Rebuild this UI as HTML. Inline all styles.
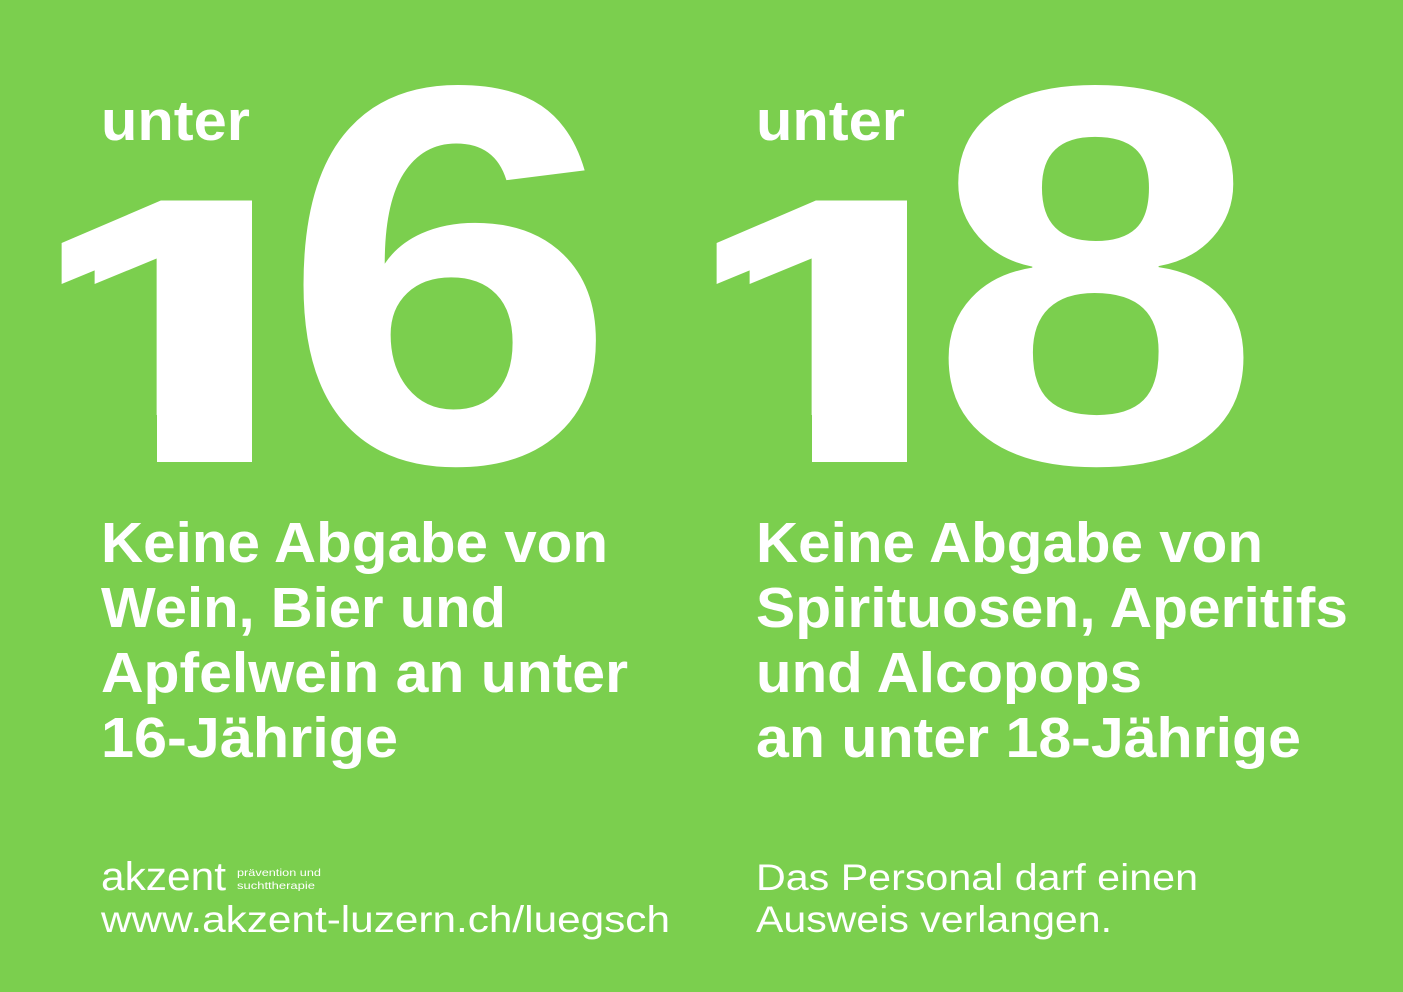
<!DOCTYPE html>
<html><head><meta charset="utf-8"><style>
html,body{margin:0;padding:0;background:#7bcf4e;}
svg{display:block}
text{font-family:"Liberation Sans",sans-serif;fill:#fff}
</style></head><body>
<svg width="1403" height="992" viewBox="0 0 1403 992" xmlns="http://www.w3.org/2000/svg">
<defs>
<clipPath id="c1"><rect x="157" y="180" width="95" height="290"/><rect x="40" y="180" width="212" height="235"/></clipPath>
<clipPath id="c2"><rect x="812" y="180" width="95" height="290"/><rect x="695" y="180" width="212" height="235"/></clipPath>
</defs>
<rect width="1403" height="992" fill="#7bcf4e"/>
<text x="101" y="140" font-size="57" font-weight="bold" textLength="149" lengthAdjust="spacingAndGlyphs">unter</text>
<text x="756" y="140" font-size="57" font-weight="bold" textLength="149" lengthAdjust="spacingAndGlyphs">unter</text>

<g clip-path="url(#c1)">
<g transform="translate(80,462) scale(1.56,1.03)"><text x="-37" y="0" font-size="369" font-weight="bold">1</text></g>
<g transform="translate(113,462) scale(1.56,1.03)"><text x="-37" y="0" font-size="369" font-weight="bold">1</text></g>
</g>
<g transform="translate(306,462) scale(1.12,1)"><text x="-22" y="0" font-size="540" font-weight="bold">6</text></g>
<g clip-path="url(#c2)">
<g transform="translate(735,462) scale(1.56,1.03)"><text x="-37" y="0" font-size="369" font-weight="bold">1</text></g>
<g transform="translate(768,462) scale(1.56,1.03)"><text x="-37" y="0" font-size="369" font-weight="bold">1</text></g>
</g>
<g transform="translate(954,462) scale(1.106,1)"><text x="-22" y="0" font-size="540" font-weight="bold">8</text></g>

<g font-size="57" font-weight="bold">
<text x="101" y="562" textLength="507" lengthAdjust="spacingAndGlyphs">Keine Abgabe von</text>
<text x="101" y="627" textLength="405" lengthAdjust="spacingAndGlyphs">Wein, Bier und</text>
<text x="101" y="692" textLength="527" lengthAdjust="spacingAndGlyphs">Apfelwein an unter</text>
<text x="101" y="757" textLength="297" lengthAdjust="spacingAndGlyphs">16-Jährige</text>
<text x="756" y="562" textLength="507" lengthAdjust="spacingAndGlyphs">Keine Abgabe von</text>
<text x="756" y="627" textLength="592" lengthAdjust="spacingAndGlyphs">Spirituosen, Aperitifs</text>
<text x="756" y="692" textLength="386" lengthAdjust="spacingAndGlyphs">und Alcopops</text>
<text x="756" y="757" textLength="545" lengthAdjust="spacingAndGlyphs">an unter 18-Jährige</text>
</g>

<text x="101" y="890" font-size="40" textLength="125" lengthAdjust="spacingAndGlyphs">akzent</text>
<text x="237" y="876" font-size="10.5" textLength="84" lengthAdjust="spacingAndGlyphs">prävention und</text>
<text x="237" y="889" font-size="10.5" textLength="78" lengthAdjust="spacingAndGlyphs">suchttherapie</text>
<text x="101" y="932" font-size="37" textLength="569" lengthAdjust="spacingAndGlyphs">www.akzent-luzern.ch/luegsch</text>
<text x="756" y="890" font-size="37" textLength="442" lengthAdjust="spacingAndGlyphs">Das Personal darf einen</text>
<text x="756" y="932" font-size="37" textLength="356" lengthAdjust="spacingAndGlyphs">Ausweis verlangen.</text>
</svg>
</body></html>
